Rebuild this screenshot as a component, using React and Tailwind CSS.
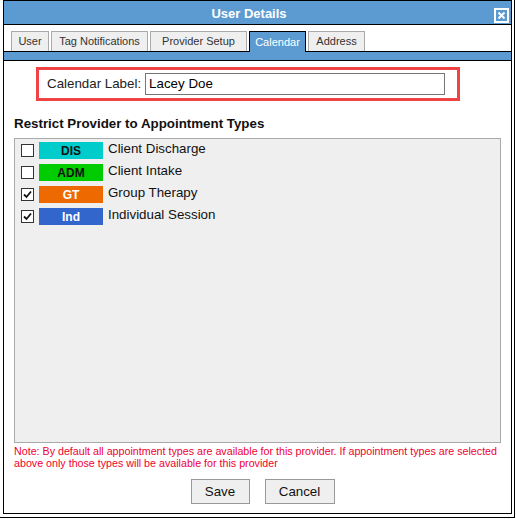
import React from "react";

const tabs = [
  { label: "User", w: "w-[38px]" },
  { label: "Tag Notifications", w: "w-[97px]" },
  { label: "Provider Setup", w: "w-[97px]" },
  { label: "Calendar", w: "w-[57px]", active: true },
  { label: "Address", w: "w-[57px]" },
];

const types = [
  { code: "DIS", name: "Client Discharge", bg: "bg-[#00cccc]", fg: "text-[#111]", checked: false },
  { code: "ADM", name: "Client Intake", bg: "bg-[#00cc00]", fg: "text-[#111]", checked: false },
  { code: "GT", name: "Group Therapy", bg: "bg-[#ee6a00]", fg: "text-white", checked: true },
  { code: "Ind", name: "Individual Session", bg: "bg-[#3366cc]", fg: "text-white", checked: true },
];

const CheckBox = ({ checked }) => (
  <div className="w-[13px] h-[13px] border border-[#333] bg-white flex items-center justify-center">
    {checked && (
      <svg width="9" height="9" viewBox="0 0 9 9">
        <path d="M1 4.5 L3.5 7 L8 1.5" fill="none" stroke="#111" strokeWidth="1.8" />
      </svg>
    )}
  </div>
);

export default function App() {
  return (
    <div
      className="w-[515px] h-[518px] border-r border-b border-black bg-white"
      style={{ fontFamily: '"Liberation Sans", Arial, sans-serif' }}
    >
      <div className="ml-[3px] w-[509px] h-[514px] border border-black flex flex-col">
        {/* title bar */}
        <div className="h-[24px] bg-[#5b9bd1] border-b border-black flex items-center">
          <div className="flex-1 text-center text-white font-bold text-[13px] pt-[3px]">User Details</div>
          <div className="mr-[2px] mt-[5px] w-[15px] h-[15px] border-2 border-white flex items-center justify-center">
            <svg width="7" height="7" viewBox="0 0 7 7">
              <path d="M0.5 0.5 L6.5 6.5 M6.5 0.5 L0.5 6.5" stroke="white" strokeWidth="2" />
            </svg>
          </div>
        </div>

        {/* tabs */}
        <div className="h-[26px] flex items-end gap-[2px] pl-[7px]">
          {tabs.map((t) =>
            t.active ? (
              <div
                key={t.label}
                className={`${t.w} h-[21px] -mb-px relative z-10 bg-[#5b9bd1] border border-b-0 border-black text-white text-[11px] flex items-center justify-center`}
              >
                {t.label}
              </div>
            ) : (
              <div
                key={t.label}
                className={`${t.w} h-[20px] bg-[#efefef] border border-b-0 border-[#aaa] text-[#333] text-[11px] flex items-center justify-center`}
              >
                {t.label}
              </div>
            )
          )}
        </div>
        <div className="h-[10px] bg-[#5b9bd1] border-y border-black" />

        {/* content */}
        <div className="flex-1 flex flex-col px-[10px] text-[13.33px]">
          <div className="ml-[22px] mt-[6px] w-[424px] h-[34px] border-[3px] border-[#f04444] flex items-center pl-[8px]">
            <span className="text-[#222]">Calendar Label:</span>
            <div className="ml-[4px] w-[300px] h-[22px] border border-[#767676] flex items-center px-[3px] text-black">
              Lacey Doe
            </div>
          </div>

          <div className="mt-[15px] leading-[16px] font-bold text-[#111]">Restrict Provider to Appointment Types</div>

          <div className="mt-[6px] h-[305px] border border-[#aaa] bg-[#efefef] pt-[3px] pl-[6px] flex flex-col gap-[5px]">
            {types.map((t) => (
              <div key={t.code} className="flex items-center h-[17px]">
                <CheckBox checked={t.checked} />
                <div className={`ml-[5px] w-[64px] h-[17px] ${t.bg} ${t.fg} text-[12px] font-bold flex items-center justify-center`}>
                  {t.code}
                </div>
                <div className="ml-[5px] text-[#111] -mt-[4px]">{t.name}</div>
              </div>
            ))}
          </div>

          <div className="mt-[2px] text-[10.7px] leading-[12px] text-[#f00030]">
            Note: By default all appointment types are available for this provider. If appointment types are selected above only those types will be available for this provider
          </div>

          <div className="mt-[10px] flex justify-center gap-[15px] pl-[10px]">
            <button className="w-[59px] h-[25px] border border-[#999] bg-[#efefef] text-[#111]">Save</button>
            <button className="w-[70px] h-[25px] border border-[#999] bg-[#efefef] text-[#111]">Cancel</button>
          </div>
        </div>
      </div>
    </div>
  );
}
